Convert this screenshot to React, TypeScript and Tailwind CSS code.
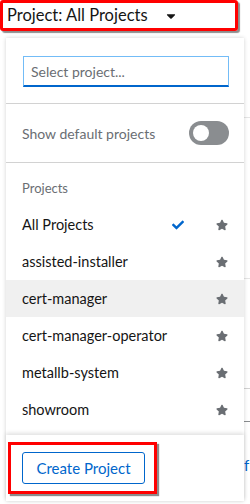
import { FaCaretDown, FaCheck, FaStar } from "react-icons/fa";

const projects = [
  { name: "All Projects", selected: true },
  { name: "assisted-installer" },
  { name: "cert-manager", hover: true },
  { name: "cert-manager-operator" },
  { name: "metallb-system" },
  { name: "showroom" },
];

export default function App() {
  return (
    <div className="relative w-[250px] h-[504px] overflow-hidden bg-white font-['Lato',sans-serif] text-[#151515]">
      {/* project selector toggle */}
      <div className="flex h-[31px] w-[238px] items-center rounded-[3px] border-[3px] border-[#ff0000] pl-[4px] shadow-[2px_2px_1px_rgba(0,0,0,0.45)]">
        <span className="text-[16.5px] leading-none">Project: All Projects</span>
        <FaCaretDown className="ml-[16px] text-[14px] text-[#151515]" />
      </div>

      {/* page content behind the menu */}
      <div className="ml-auto w-[6px]">
        <div className="mt-[86px] border-t border-[#e5e5e5]" />
        <div className="mt-[160px] border-t border-[#e5e5e5]" />
        <div className="mt-[109px] border-t border-[#d2d2d2]" />
        <div className="mt-[32px] border-t border-[#8a8d90]" />
        <div className="mt-[36px] text-[15px] leading-none text-[#0066cc]">f</div>
      </div>

      {/* dropdown menu */}
      <div className="absolute left-[6px] top-[38px] flex w-[238px] flex-col bg-white shadow-[0_0_4px_rgba(0,0,0,0.18)]">
        <div className="border-b border-[#d2d2d2] px-[17px] pb-[16px] pt-[18px]">
          <div className="flex h-[31px] w-[206px] items-center border border-b-2 border-[#73bcf7] border-b-[#0066cc] px-[7px] text-[14px] text-[#6a6e73]">
            Select project...
          </div>
        </div>

        <div className="flex h-[59px] items-center justify-between border-b border-[#d2d2d2] pl-[16px] pr-[15px]">
          <span className="text-[14px] text-[#6a6e73]">Show default projects</span>
          <div className="flex h-[24px] w-[40px] items-center rounded-full bg-[#8a8d90] pl-[4px]">
            <div className="h-[16px] w-[16px] rounded-full bg-white" />
          </div>
        </div>

        <div className="pt-[8px]">
          <div className="flex h-[35px] items-center px-[16px] text-[13px] text-[#6a6e73]">Projects</div>
          {projects.map((p) => (
            <div
              key={p.name}
              className={`flex h-[37px] items-center pl-[16px] pr-[16px] text-[14.5px] ${p.hover ? "bg-[#f0f0f0]" : ""}`}
            >
              <span className="flex-1">{p.name}</span>
              {p.selected && <FaCheck className="mr-[32px] text-[12px] text-[#0066cc]" />}
              <FaStar className="text-[12px] text-[#6a6e73]" />
            </div>
          ))}
        </div>

        <div className="mt-[7px] px-[2px] pb-[7px] pt-[7px] shadow-[0_-2px_4px_rgba(0,0,0,0.12)]">
          <div className="w-[149px] border-[3px] border-[#ff0000] pb-[7px] pl-[11px] pr-[9px] pt-[7px] shadow-[2px_2px_1px_rgba(0,0,0,0.45)]">
            <button className="flex h-[32px] w-[123px] items-center justify-center rounded-[3px] border border-[#0066cc] text-[15px] text-[#0066cc]">
              Create Project
            </button>
          </div>
        </div>
      </div>
    </div>
  );
}
